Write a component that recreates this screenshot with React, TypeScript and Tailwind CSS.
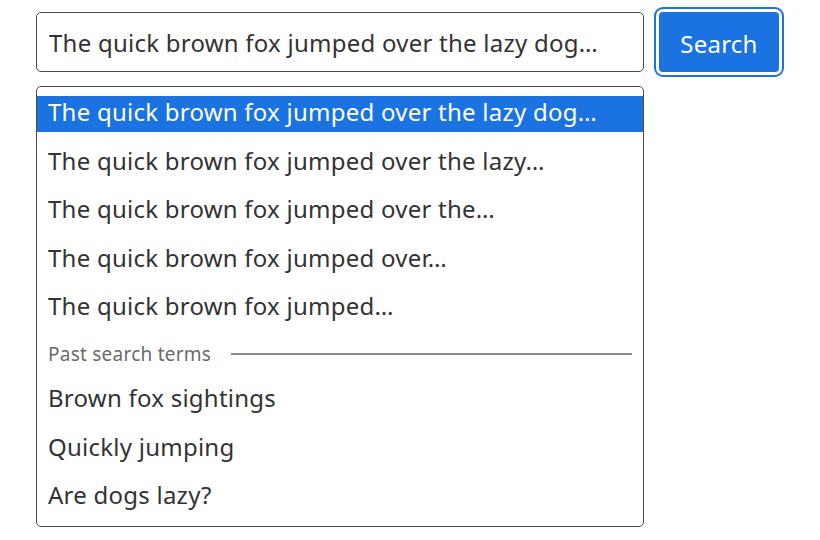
import React from "react";

const suggestions = [
  "The quick brown fox jumped over the lazy dog…",
  "The quick brown fox jumped over the lazy…",
  "The quick brown fox jumped over the…",
  "The quick brown fox jumped over…",
  "The quick brown fox jumped…",
];

const past = ["Brown fox sightings", "Quickly jumping", "Are dogs lazy?"];

export default function App() {
  return (
    <div
      className="w-[820px] h-[540px] bg-white pl-[36px] pt-[12px] tracking-[0.24px]"
      style={{ fontFamily: '"Noto Sans", sans-serif' }}
    >
      <div className="flex items-start gap-[15px]">
        <div className="w-[608px] h-[60px] border border-[#4a4a4a] rounded-[5px] flex items-center px-[12px] pt-[1px] text-[24px] text-[#333333]">
          The quick brown fox jumped over the lazy dog…
        </div>
        <button className="w-[120px] h-[60px] rounded-[4px] bg-[#1a73e0] text-white text-[24px] outline-2 outline-solid outline-[#1a73e0] outline-offset-[3px] flex items-center justify-center pt-[3px]">
          Search
        </button>
      </div>
      <div className="mt-[14px] w-[608px] h-[441px] border border-[#4a4a4a] rounded-[5px] pt-[9px] flex flex-col gap-[12.6px] text-[24px] text-[#333333]">
        {suggestions.map((s, i) => (
          <div
            key={i}
            className={
              "h-[36px] flex items-center px-[11px] pb-[4px] " +
              (i === 0 ? "bg-[#1a73e0] text-white" : "")
            }
          >
            {s}
          </div>
        ))}
        <div className="h-[30px] flex items-center px-[11px] gap-[20px]">
          <span className="text-[19px] text-[#6b6b6b]">Past search terms</span>
          <div className="flex-1 h-[1.5px] bg-[#8a8a8a]" />
        </div>
        {past.map((s, i) => (
          <div key={i} className="h-[36px] flex items-center px-[11px] pb-[3px]">
            {s}
          </div>
        ))}
      </div>
    </div>
  );
}
